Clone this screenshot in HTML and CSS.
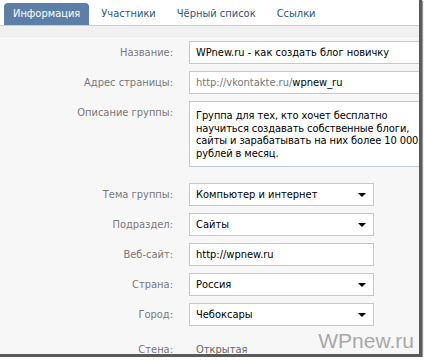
FILE: index.html
```html
<!DOCTYPE html>
<html lang="ru">
<head>
  <meta charset="UTF-8">
  <title>Информация</title>
  <link rel="stylesheet" href="styles.css">
</head>
<body>
  <div class="shot">
    <div class="tabs">
      <span class="tab active">Информация</span>
      <span class="tab">Участники</span>
      <span class="tab">Чёрный список</span>
      <span class="tab">Ссылки</span>
    </div>
    <div class="strip"></div>

    <div class="form">
      <div class="row">
        <div class="label">Название:</div>
        <div class="field wide">WPnew.ru - как создать блог новичку</div>
      </div>
      <div class="row">
        <div class="label">Адрес страницы:</div>
        <div class="field wide"><span class="muted">http://vkontakte.ru/</span>wpnew_ru</div>
      </div>
      <div class="row">
        <div class="label">Описание группы:</div>
        <div class="field wide area">Группа для тех, кто хочет бесплатно научиться создавать собственные блоги, сайты и зарабатывать на них более 10&nbsp;000 рублей в месяц.</div>
      </div>

      <div class="row section">
        <div class="label">Тема группы:</div>
        <div class="field select">Компьютер и интернет<span class="arrow"></span></div>
      </div>
      <div class="row">
        <div class="label">Подраздел:</div>
        <div class="field select">Сайты<span class="arrow"></span></div>
      </div>
      <div class="row">
        <div class="label">Веб-сайт:</div>
        <div class="field">http://wpnew.ru</div>
      </div>
      <div class="row">
        <div class="label">Страна:</div>
        <div class="field select">Россия<span class="arrow"></span></div>
      </div>
      <div class="row">
        <div class="label">Город:</div>
        <div class="field select">Чебоксары<span class="arrow"></span></div>
      </div>
      <div class="row wall">
        <div class="label">Стена:</div>
        <div class="value">Открытая</div>
      </div>
    </div>

    <div class="watermark">WPnew.ru</div>
  </div>
</body>
</html>
```

FILE: styles.css
```css
body {
  margin: 0;
  background: #ffffff;
  font-family: "DejaVu Sans Condensed", "DejaVu Sans", sans-serif;
  font-stretch: condensed;
  font-size: 11px;
}

/* the screenshot itself, with its drop shadow */
.shot {
  position: relative;
  width: 419px;
  height: 354px;
  overflow: hidden;
  background: #f7f7f7;
  border-right: 3px solid #5a5a5a;
  border-bottom: 3px solid #5a5a5a;
  box-shadow: 1px 1px 1px #999999;
}

.tabs {
  display: flex;
  align-items: flex-end;
  height: 25px;
  padding-left: 4px;
  background: #ffffff;
  border-bottom: 1px solid #c9cdd2;
}

.tab {
  padding: 0 9px;
  height: 22px;
  line-height: 22px;
  margin-right: 3px;
  color: #2b587a;
  border-radius: 4px 4px 0 0;
}

.tab.active {
  background: #5b7fa6;
  color: #ffffff;
}

.strip {
  height: 10px;
  background: #f1f1f1;
  border-bottom: 1px solid #ececec;
}

.form {
  padding-top: 4px;
}

.row {
  display: flex;
  align-items: flex-start;
  margin-bottom: 7px;
}

.row.section {
  margin-top: 16px;
}

.row.wall {
  margin-top: 12px;
}

.label {
  width: 173px;
  text-align: right;
  color: #777777;
  line-height: 23px;
  flex-shrink: 0;
}

.field {
  margin-left: 16px;
  box-sizing: border-box;
  width: 185px;
  height: 23px;
  line-height: 21px;
  padding: 0 6px;
  background: #ffffff;
  border: 1px solid #c0c8d0;
  color: #000000;
  white-space: nowrap;
  flex-shrink: 0;
  position: relative;
}

.field.wide {
  width: 260px;
}

.field.area {
  height: 66px;
  white-space: normal;
  line-height: 12.5px;
  padding: 8px 6px;
  width: 260px;
  letter-spacing: -0.1px;
}

.muted {
  color: #777777;
}

.arrow {
  position: absolute;
  right: 7px;
  top: 9px;
  border-left: 4px solid transparent;
  border-right: 4px solid transparent;
  border-top: 4px solid #000000;
}

.value {
  margin-left: 23px;
  line-height: 23px;
  color: #666666;
}

.watermark {
  position: absolute;
  right: 5px;
  bottom: 1px;
  font-family: "Liberation Sans Narrow", "Liberation Sans", sans-serif;
  font-size: 21px;
  color: #a8a8a8;
}
```
